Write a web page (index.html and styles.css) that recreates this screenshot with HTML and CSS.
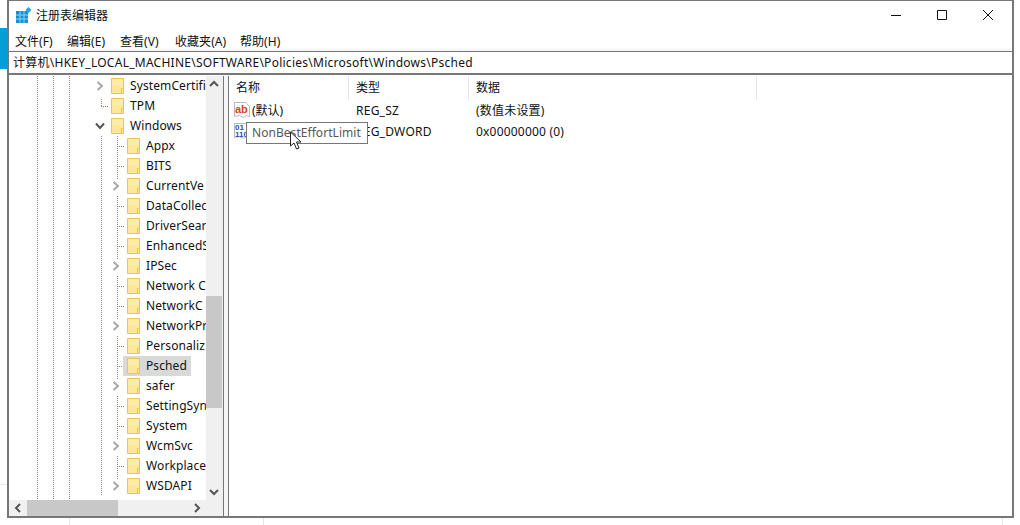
FILE: index.html
```html
<!DOCTYPE html>
<html lang="zh-CN">
<head>
<meta charset="utf-8">
<title>注册表编辑器</title>
<link rel="stylesheet" href="styles.css">
</head>
<body>
<svg class="defs" width="0" height="0" aria-hidden="true">
  <symbol id="folder" viewBox="0 0 13 16">
    <path d="M.5.5h12v15H.5z" fill="#ffe79a" stroke="#e9c64f"/>
    <path d="M1 1h11v6H1z" fill="#fff0b8" opacity=".55"/>
    <path d="M10.5 15.5v-5h2" fill="none" stroke="#e9c64f"/>
  </symbol>
  <symbol id="chev-r" viewBox="0 0 8 10">
    <path d="M1.500 1l4.500 4-4.500 4" fill="none" stroke="#a9a9a9" stroke-width="2"/>
  </symbol>
  <symbol id="chev-d" viewBox="0 0 10 8">
    <path d="M1 1.500l4 4.500 4-4.500" fill="none" stroke="#555" stroke-width="2"/>
  </symbol>
</svg>
<div class="strip"></div>
<i class="sidetick"></i>
<div class="window">
  <header class="titlebar">
    <svg class="appicon" width="16" height="16" viewBox="0 0 16 16">
      <path d="M0 4h12v12H0z" fill="#1291d8"/>
      <path d="M4 4v12M8 4v12M0 8h12M0 12h12" stroke="#8fd0f2" stroke-width="1"/>
      <path d="M12.500 0l3 3-3 3-3-3z" fill="#27a4e2"/>
    </svg>
    <span class="title">注册表编辑器</span>
    <div class="controls">
      <svg class="ctl" width="46" height="30" viewBox="0 0 46 30"><path d="M18 15.500h10" stroke="#111"/></svg>
      <svg class="ctl" width="46" height="30" viewBox="0 0 46 30"><path d="M18.500 10.500h9v9h-9z" fill="none" stroke="#111"/></svg>
      <svg class="ctl" width="46" height="30" viewBox="0 0 46 30"><path d="M18 10l10 10M28 10l-10 10" stroke="#111" fill="none"/></svg>
    </div>
  </header>
  <nav class="menubar">
    <span class="menu m1">文件(F)</span>
    <span class="menu m2">编辑(E)</span>
    <span class="menu m3">查看(V)</span>
    <span class="menu m4">收藏夹(A)</span>
    <span class="menu m5">帮助(H)</span>
  </nav>
  <div class="address">计算机\HKEY_LOCAL_MACHINE\SOFTWARE\Policies\Microsoft\Windows\Psched</div>
  <main class="panes">
    <section class="treepane">
      <div class="treebody">
        <ul class="tree">
          <li class="row d1 cut"><svg class="chev"><use href="#chev-r"/></svg><svg class="folder"><use href="#folder"/></svg><span class="label">SystemCertifi</span></li>
          <li class="row d1 dots"><svg class="folder"><use href="#folder"/></svg><span class="label">TPM</span></li>
          <li class="row d1 cut"><svg class="chev open"><use href="#chev-d"/></svg><svg class="folder"><use href="#folder"/></svg><span class="label">Windows</span></li>
          <li class="row d2 dots"><svg class="folder"><use href="#folder"/></svg><span class="label">Appx</span></li>
          <li class="row d2 dots"><svg class="folder"><use href="#folder"/></svg><span class="label">BITS</span></li>
          <li class="row d2 cut"><svg class="chev"><use href="#chev-r"/></svg><svg class="folder"><use href="#folder"/></svg><span class="label">CurrentVe</span></li>
          <li class="row d2 dots"><svg class="folder"><use href="#folder"/></svg><span class="label">DataCollec</span></li>
          <li class="row d2 dots"><svg class="folder"><use href="#folder"/></svg><span class="label">DriverSear</span></li>
          <li class="row d2 dots"><svg class="folder"><use href="#folder"/></svg><span class="label">EnhancedS</span></li>
          <li class="row d2 cut"><svg class="chev"><use href="#chev-r"/></svg><svg class="folder"><use href="#folder"/></svg><span class="label">IPSec</span></li>
          <li class="row d2 dots"><svg class="folder"><use href="#folder"/></svg><span class="label">Network C</span></li>
          <li class="row d2 dots"><svg class="folder"><use href="#folder"/></svg><span class="label">NetworkC</span></li>
          <li class="row d2 cut"><svg class="chev"><use href="#chev-r"/></svg><svg class="folder"><use href="#folder"/></svg><span class="label">NetworkPr</span></li>
          <li class="row d2 dots"><svg class="folder"><use href="#folder"/></svg><span class="label">Personaliz</span></li>
          <li class="row d2 dots"><span class="selbox"><svg class="folder"><use href="#folder"/></svg><span class="label">Psched</span></span></li>
          <li class="row d2 cut"><svg class="chev"><use href="#chev-r"/></svg><svg class="folder"><use href="#folder"/></svg><span class="label">safer</span></li>
          <li class="row d2 dots"><svg class="folder"><use href="#folder"/></svg><span class="label">SettingSyn</span></li>
          <li class="row d2 dots"><svg class="folder"><use href="#folder"/></svg><span class="label">System</span></li>
          <li class="row d2 cut"><svg class="chev"><use href="#chev-r"/></svg><svg class="folder"><use href="#folder"/></svg><span class="label">WcmSvc</span></li>
          <li class="row d2 dots"><svg class="folder"><use href="#folder"/></svg><span class="label">Workplace</span></li>
          <li class="row d2 cut"><svg class="chev"><use href="#chev-r"/></svg><svg class="folder"><use href="#folder"/></svg><span class="label">WSDAPI</span></li>
        </ul>
        <div class="vscroll">
          <svg class="sbtn" width="16" height="16" viewBox="0 0 16 16"><path d="M4 10l4-4 4 4" fill="none" stroke="#555" stroke-width="2"/></svg>
          <div class="vtrack"><div class="vthumb"></div></div>
          <svg class="sbtn" width="16" height="16" viewBox="0 0 16 16"><path d="M4 6l4 4 4-4" fill="none" stroke="#555" stroke-width="2"/></svg>
        </div>
      </div>
      <div class="hscroll">
        <svg class="sbtn" width="18" height="16" viewBox="0 0 18 16"><path d="M11 4L7 8l4 4" fill="none" stroke="#555" stroke-width="2"/></svg>
        <div class="htrack"><div class="hthumb"></div></div>
        <svg class="sbtn" width="18" height="16" viewBox="0 0 18 16"><path d="M7 4l4 4-4 4" fill="none" stroke="#555" stroke-width="2"/></svg>
      </div>
    </section>
    <div class="splitter"></div>
    <section class="listpane">
      <div class="lhead">
        <span class="col c1">名称</span>
        <span class="col c2">类型</span>
        <span class="col c3">数据</span>
      </div>
      <div class="lrow">
        <span class="cell c1">
          <svg class="regicon" width="16" height="17" viewBox="0 0 16 17">
            <path d="M.5.500h11l4 4v10l-3-1-3 2-4-2-5 1z" fill="#fff" stroke="#b9b9b9"/>
            <text x="1" y="11" class="abtext">ab</text>
          </svg>
          <span>(默认)</span>
        </span>
        <span class="cell c2">REG_SZ</span>
        <span class="cell c3">(数值未设置)</span>
      </div>
      <div class="lrow">
        <span class="cell c1">
          <svg class="regicon" width="16" height="17" viewBox="0 0 16 17">
            <path d="M.5.500h11l4 4v10l-3-1-3 2-4-2-5 1z" fill="#fff" stroke="#b9b9b9"/>
            <text x="1" y="7" class="bintext">01</text>
            <text x="1" y="14" class="bintext">110</text>
          </svg>
          <span class="hidden-name">NonBestEffortLimit</span>
        </span>
        <span class="cell c2">REG_DWORD</span>
        <span class="cell c3">0x00000000 (0)</span>
      </div>
      <div class="tooltip">NonBestEffortLimit</div>
      <svg class="cursor" width="14" height="19" viewBox="0 0 14 19">
        <path d="M1.500 1v14l3.500-3 2.500 6 2.500-1-2.500-6h4.500z" fill="#fff" stroke="#222"/>
      </svg>
    </section>
  </main>
</div>
<div class="backdrop">
  <i class="tick t1"></i><i class="tick t2"></i><i class="tick t3"></i>
</div>
</body>
</html>
```
FILE: styles.css
```css
* { box-sizing: border-box; }
html, body { margin: 0; padding: 0; }
body {
  width: 1020px;
  height: 525px;
  overflow: hidden;
  background: #fff;
  padding-left: 7px;
  font-family: "Noto Sans", "Noto Sans CJK SC", sans-serif;
  font-size: 12px;
  color: #111;
  position: relative;
}
.defs { position: absolute; }
.strip {
  position: absolute;
  left: 0;
  top: 28px;
  width: 7px;
  height: 41px;
  background: #009fd9;
}
.sidetick {
  position: absolute;
  left: 0;
  top: 484px;
  width: 7px;
  height: 1px;
  background: #e6e6e6;
}
.window {
  width: 1007px;
  height: 518px;
  border: solid #777;
  border-width: 0 2px 2px 2px;
  background: #fff;
  display: flex;
  flex-direction: column;
  box-shadow: inset 0 1px 0 #777;
}
.titlebar {
  height: 30px;
  display: flex;
  align-items: center;
  padding-left: 7px;
  flex: none;
}
.appicon { flex: none; }
.title { margin-left: 4px; font-size: 12px; line-height: 30px; padding-top: 1px; }
.controls { margin-left: auto; margin-right: 1px; display: flex; }
.ctl { display: block; }
.menubar {
  height: 21px;
  flex: none;
  display: flex;
  align-items: center;
  padding-left: 6px;
  padding-top: 1px;
  background: linear-gradient(#fff 80%, #f4f4f4);
}
.menu { line-height: 21px; white-space: nowrap; letter-spacing: .05px; }
.m1 { width: 52px; }
.m2 { width: 53px; }
.m3 { width: 55px; }
.m4 { width: 65px; }
.address {
  height: 24px;
  flex: none;
  border-top: 1px solid #777;
  border-bottom: 2px solid #777;
  padding-left: 4px;
  line-height: 21px;
  white-space: nowrap;
  overflow: hidden;
  letter-spacing: .26px;
}
.panes {
  flex: 1;
  min-height: 0;
  display: flex;
  margin-top: 1px;
}
.treepane {
  width: 215px;
  flex: none;
  display: flex;
  flex-direction: column;
  border-right: 1px solid #777;
}
.treebody { flex: 1; min-height: 0; display: flex; }
.tree {
  list-style: none;
  margin: 0;
  padding: 0;
  width: 197px;
  flex: none;
  overflow: hidden;
  background-image:
    repeating-linear-gradient(#888 0 1px, transparent 1px 2px),
    repeating-linear-gradient(#888 0 1px, transparent 1px 2px),
    repeating-linear-gradient(#888 0 1px, transparent 1px 2px);
  background-size: 1px 100%;
  background-repeat: no-repeat;
  background-position: 28px 0, 44px 0, 60px 0;
}
.row {
  height: 20px;
  position: relative;
  display: flex;
  align-items: center;
  white-space: nowrap;
}
.row.d1 { padding-left: 93px; }
.row.d2 { padding-left: 109px; }
.row::before {
  content: "";
  position: absolute;
  left: 92px;
  top: 0;
  bottom: 0;
  width: 1px;
  background: repeating-linear-gradient(#888 0 1px, transparent 1px 2px);
}
.row.d1.cut::before { display: none; }
.row.d1.dots::before { bottom: 9px; top: 3px; }
.row.d2::after {
  content: "";
  position: absolute;
  left: 108px;
  top: 0;
  bottom: 0;
  width: 1px;
  background: repeating-linear-gradient(#888 0 1px, transparent 1px 2px);
}
.row.d2.cut::after {
  height: 3px;
  bottom: auto;
}
.row.dots {
  background-image: repeating-linear-gradient(90deg, #888 0 1px, transparent 1px 2px);
  background-size: 7px 1px;
  background-repeat: no-repeat;
}
.row.d1.dots { background-position: 92px 10px; }
.row.d2.dots { background-position: 108px 10px; }
.chev { position: absolute; width: 8px; height: 10px; top: 5px; }
.d1 .chev { left: 87px; }
.d2 .chev { left: 103px; }
.chev.open { width: 10px; height: 8px; top: 6px; left: 86px; }
.folder { width: 13px; height: 16px; flex: none; margin-left: 9px; }
.label {
  margin-left: 6px;
  letter-spacing: .1px;
  line-height: 20px;
  overflow: hidden;
}
.selbox {
  display: flex;
  align-items: center;
  margin-left: 5px;
  padding: 0 4px 0 4px;
  height: 20px;
  background: #d9d9d9;
  position: relative;
}
.selbox .folder { margin-left: 0; }
.vscroll {
  width: 17px;
  flex: none;
  background: #f0f0f0;
  display: flex;
  flex-direction: column;
}
.sbtn { display: block; flex: none; }
.vtrack { flex: 1; min-height: 0; padding-top: 204px; }
.vthumb { height: 112px; width: 16px; background: #c8c8c8; }
.hscroll {
  height: 16px;
  flex: none;
  display: flex;
  background: #f0f0f0;
}
.htrack { width: 161px; flex: none; }
.hthumb { width: 91px; height: 100%; background: #c8c8c8; }
.splitter {
  width: 5px;
  flex: none;
  background: #f4f4f4;
  border-right: 1px solid #777;
}
.listpane {
  flex: 1;
  min-width: 0;
  position: relative;
}
.lhead {
  height: 24px;
  display: flex;
  align-items: center;
}
.col {
  height: 24px;
  line-height: 24px;
  padding-left: 7px;
  border-right: 1px solid #e5e5e5;
}
.col.c1 { width: 120px; }
.col.c2 { width: 120px; }
.col.c3 { width: 288px; }
.lrow { height: 21px; display: flex; align-items: center; white-space: nowrap; }
.lrow .cell { line-height: 21px; }
.cell.c1 { width: 120px; padding-left: 5px; display: flex; align-items: center; gap: 2px; overflow: hidden; }
.cell.c2 { width: 120px; padding-left: 7px; letter-spacing: .25px; }
.cell.c3 { padding-left: 7px; letter-spacing: .2px; }
.regicon { flex: none; }
.hidden-name { visibility: hidden; }
.abtext { font: bold 11px "Liberation Sans", sans-serif; fill: #d9431e; }
.bintext { font: bold 8px "Liberation Sans", sans-serif; fill: #1b4fb5; }
.tooltip {
  position: absolute;
  left: 17px;
  top: 46px;
  width: 122px;
  height: 22px;
  border: 1px solid #777;
  background: #fff;
  color: #575757;
  line-height: 20px;
  padding-left: 5px;
  white-space: nowrap;
  letter-spacing: .05px;
}
.cursor { position: absolute; left: 60px; top: 55px; }
.backdrop { position: absolute; left: 0; top: 518px; width: 1020px; height: 7px; }
.tick { position: absolute; top: 0; bottom: 0; width: 1px; background: #e6e6e6; }
.t1 { left: 69px; }
.t2 { left: 263px; }
.t3 { left: 1002px; }
```
